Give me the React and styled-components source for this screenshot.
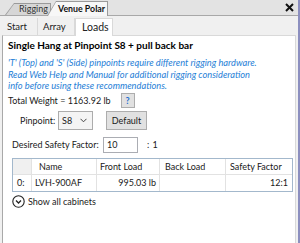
import React from "react";
import styled, { createGlobalStyle } from "styled-components";

const GlobalStyle = createGlobalStyle`
  html, body {
    margin: 0;
    padding: 0;
    width: 300px;
    height: 243px;
    overflow: hidden;
    background: #ffffff;
  }
  body {
    font-family: Lato, "Noto Sans", sans-serif;
    font-size: 9px;
    color: #1a1a1a;
    white-space: nowrap;
  }
`;

const Window = styled.div`
  width: 300px;
  height: 243px;
  box-sizing: border-box;
  background: #f0f0f0;
  border-right: 2px solid #8c8fbf;
  display: flex;
  flex-direction: column;
`;

const TopStrip = styled.div`
  height: 16px;
  box-sizing: border-box;
  background: #e3e3e3;
  border-bottom: 1px solid #a8a8a8;
  display: flex;
  align-items: flex-end;
  padding-left: 5px;
`;

const SlantTab = styled.div`
  position: relative;
  height: ${(p) => (p.active ? 15 : 12)}px;
  width: ${(p) => p.w}px;
  margin-left: ${(p) => p.ml || 0}px;
  margin-bottom: ${(p) => (p.active ? -1 : 0)}px;
  z-index: ${(p) => (p.active ? 2 : 1)};
  background: #9a9a9a;
  clip-path: polygon(0 100%, 9px 0, 100% 0, 100% 100%);
  font-size: ${(p) => (p.active ? 8.8 : 9)}px;
  font-weight: ${(p) => (p.active ? 700 : 400)};
  color: ${(p) => (p.active ? "#111" : "#333")};

  &::before {
    content: "";
    position: absolute;
    inset: 1px 1px 0 1px;
    background: ${(p) => (p.active ? "#f7f7f7" : "#d6d6d6")};
    clip-path: polygon(0 100%, 8px 0, 100% 0, 100% 100%);
  }

  span {
    position: absolute;
    left: ${(p) => p.tx}px;
    top: ${(p) => (p.active ? 2 : 0)}px;
    line-height: 12px;
  }
`;

const CloseX = styled.div`
  margin-left: auto;
  margin-right: 4px;
  align-self: center;
  display: flex;
`;

const SubTabs = styled.div`
  height: 19px;
  display: flex;
  align-items: flex-end;
  position: relative;
  z-index: 1;
`;

const SubTab = styled.div`
  height: ${(p) => (p.active ? 18 : 17)}px;
  width: ${(p) => p.w}px;
  box-sizing: border-box;
  padding-left: ${(p) => p.pl}px;
  line-height: 17px;
  font-size: ${(p) => (p.active ? 10.5 : 9.5)}px;
  color: #222;
  background: ${(p) => (p.active ? "#ffffff" : "transparent")};
  border: ${(p) => (p.active ? "1px solid #d9d9d9" : "none")};
  border-bottom: none;
  border-right: ${(p) => (p.active || p.sep ? "1px solid #d9d9d9" : "none")};
  margin-bottom: ${(p) => (p.active ? -1 : 0)}px;
`;

const Panel = styled.div`
  flex: 1;
  margin-left: 2px;
  margin-right: 2px;
  background: #ffffff;
  border-top: 1px solid #d9d9d9;
  border-left: 1px solid #a9a9a9;
  border-right: 1px solid #d9d9d9;
  padding: 3px 0 0 5px;
  display: flex;
  flex-direction: column;
`;

const Title = styled.div`
  font-weight: 700;
  font-size: 10px;
  line-height: 12px;
  color: #000;
`;

const Note = styled.div`
  margin-top: 6px;
  font-style: italic;
  font-size: 9.25px;
  line-height: 11.6px;
  color: #1e7ed6;
`;

const Row = styled.div`
  display: flex;
  align-items: center;
  height: ${(p) => p.h}px;
  margin-top: ${(p) => p.mt}px;
  padding-left: ${(p) => p.pl || 0}px;
`;

const Label = styled.span`
  color: #1a1a1a;
  width: ${(p) => (p.w ? `${p.w}px` : "auto")};
`;

const HelpButton = styled.div`
  width: 14px;
  height: 15px;
  box-sizing: border-box;
  margin-left: ${(p) => p.ml}px;
  background: #e1e1e1;
  border: 1px solid #adadad;
  color: #1e6fd0;
  font-weight: 700;
  display: flex;
  align-items: center;
  justify-content: center;
`;

const Select = styled.div`
  width: 35px;
  height: 19px;
  box-sizing: border-box;
  border: 1px solid #acacac;
  background: #f4f4f4;
  display: flex;
  align-items: center;
  justify-content: space-between;
  padding: 0 5px 0 3px;
`;

const Button = styled.div`
  width: 41px;
  height: 19px;
  box-sizing: border-box;
  margin-left: ${(p) => p.ml}px;
  background: #e1e1e1;
  border: 1px solid #adadad;
  display: flex;
  align-items: center;
  justify-content: center;
`;

const Input = styled.div`
  width: 35px;
  height: 16px;
  box-sizing: border-box;
  border: 1px solid #abadb3;
  background: #fff;
  padding-left: 3px;
  line-height: 14px;
`;

const Ratio = styled.span`
  margin-left: 9px;
  word-spacing: 1px;
`;

const Table = styled.div`
  margin-top: 5px;
  margin-left: 4px;
  width: 281px;
  box-sizing: border-box;
  border: 1px solid #a3b8cc;
  display: grid;
  grid-template-columns: 19px 65px 63px 66px 1fr;
`;

const Cell = styled.div`
  height: 16px;
  line-height: 16px;
  box-sizing: border-box;
  padding: 0 ${(p) => p.pr || 0}px 0 ${(p) => p.pl || 0}px;
  text-align: ${(p) => (p.right ? "right" : "left")};
  background: ${(p) => (p.corner ? "#f0f0f0" : "#ffffff")};
  border-right: ${(p) => (p.last ? "none" : "1px solid #e2e2e2")};
  border-bottom: ${(p) => (p.head ? "1px solid #e2e2e2" : "none")};
  overflow: hidden;
`;

const Expander = styled.div`
  display: flex;
  align-items: center;
  gap: 3px;
  margin-top: 3px;
  margin-left: 4px;
`;

function App() {
  return (
    <>
      <GlobalStyle />
      <Window>
        <TopStrip>
          <SlantTab w={46} tx={14}>
            <span>Rigging</span>
          </SlantTab>
          <SlantTab active w={61} ml={-4} tx={11}>
            <span>Venue Polar</span>
          </SlantTab>
          <CloseX>
            <svg width="9" height="9" viewBox="0 0 9 9">
              <path d="M1 1 L8 8 M8 1 L1 8" stroke="#111" strokeWidth="2" />
            </svg>
          </CloseX>
        </TopStrip>
        <SubTabs>
          <SubTab w={38} pl={7} sep>
            Start
          </SubTab>
          <SubTab w={37} pl={5} sep>
            Array
          </SubTab>
          <SubTab active w={38} pl={6}>
            Loads
          </SubTab>
        </SubTabs>
        <Panel>
          <Title>Single Hang at Pinpoint S8 + pull back bar</Title>
          <Note>
            'T' (Top) and 'S' (Side) pinpoints require different rigging hardware.
            <br />
            Read Web Help and Manual for additional rigging consideration
            <br />
            info before using these recommendations.
          </Note>
          <Row h={15} mt={1}>
            <Label>Total Weight = 1163.92 lb</Label>
            <HelpButton ml={10}>?</HelpButton>
          </Row>
          <Row h={19} mt={3} pl={12}>
            <Label w={38}>Pinpoint:</Label>
            <Select>
              <span>S8</span>
              <svg width="7" height="5" viewBox="0 0 7 5">
                <path d="M0.5 0.8 L3.5 3.8 L6.5 0.8" fill="none" stroke="#444" strokeWidth="1" />
              </svg>
            </Select>
            <Button ml={13}>Default</Button>
          </Row>
          <Row h={16} mt={7} pl={4}>
            <Label w={91}>Desired Safety Factor:</Label>
            <Input>10</Input>
            <Ratio>: 1</Ratio>
          </Row>
          <Table>
            <Cell head corner />
            <Cell head pl={7}>Name</Cell>
            <Cell head pl={3}>Front Load</Cell>
            <Cell head pl={5}>Back Load</Cell>
            <Cell head pl={4} last>Safety Factor</Cell>
            <Cell pl={4}>0:</Cell>
            <Cell pl={3}>LVH-900AF</Cell>
            <Cell right pr={3}>995.03 lb</Cell>
            <Cell />
            <Cell right pr={4} last>12:1</Cell>
          </Table>
          <Expander>
            <svg width="13" height="13" viewBox="0 0 13 13">
              <circle cx="6.5" cy="6.5" r="5.7" fill="none" stroke="#222" strokeWidth="1.1" />
              <path d="M4 5.5 L6.5 8 L9 5.5" fill="none" stroke="#222" strokeWidth="1.3" />
            </svg>
            <span>Show all cabinets</span>
          </Expander>
        </Panel>
      </Window>
    </>
  );
}

export default App;
